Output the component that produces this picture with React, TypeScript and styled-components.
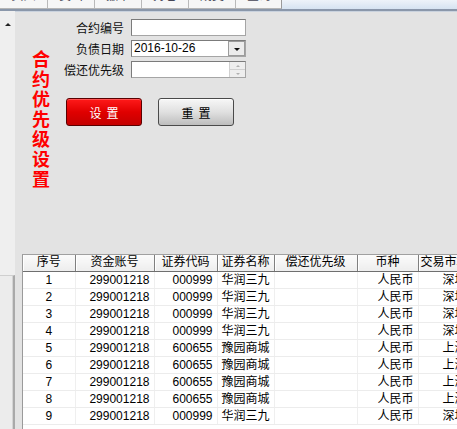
import React from 'react';
import styled, { createGlobalStyle } from 'styled-components';

const GlobalStyle = createGlobalStyle`
  html, body {
    margin: 0;
    padding: 0;
    background: #e3e3e3;
  }
  * {
    box-sizing: border-box;
  }
`;

type Row = {
  no: number;
  account: string;
  code: string;
  name: string;
  priority: string;
  currency: string;
  market: string;
};

const sz = { code: '000999', name: '华润三九', market: '深圳' };
const sh = { code: '600655', name: '豫园商城', market: '上海' };

const rows: Row[] = [sz, sz, sz, sz, sh, sh, sh, sh, sz].map((s, i) => ({
  no: i + 1,
  account: '299001218',
  priority: '',
  currency: '人民币',
  ...s,
}));

type Align = 'left' | 'center' | 'right';

const columns: { key: keyof Row; title: string; width: number; align: Align }[] = [
  { key: 'no', title: '序号', width: 52, align: 'center' },
  { key: 'account', title: '资金账号', width: 79, align: 'right' },
  { key: 'code', title: '证券代码', width: 63, align: 'right' },
  { key: 'name', title: '证券名称', width: 57, align: 'left' },
  { key: 'priority', title: '偿还优先级', width: 83, align: 'left' },
  { key: 'currency', title: '币种', width: 61, align: 'right' },
  { key: 'market', title: '交易市场', width: 53, align: 'right' },
];

const tableWidth = columns.reduce((sum, c) => sum + c.width, 0);

const tabs = ['买入', '卖出', '撤单', '持仓', '成交', '查询'];

const App: React.FC = () => {
  return (
    <Page>
      <GlobalStyle />
      <TabBar>
        <Tabs>
          {tabs.map((t) => (
            <Tab key={t}>
              <span>{t}</span>
            </Tab>
          ))}
        </Tabs>
        <TabFiller />
      </TabBar>
      <Body>
        <ScrollStrip>
          <UpArrow />
          <Thumb />
        </ScrollStrip>
        <Content>
          <TopSection>
            <Title>合约优先级设置</Title>
            <FormCol>
              <Field>
                <Label>合约编号</Label>
                <TextBox />
              </Field>
              <Field>
                <Label>负债日期</Label>
                <TextBox>
                  <BoxText>2016-10-26</BoxText>
                  <DropButton>
                    <DownTri />
                  </DropButton>
                </TextBox>
              </Field>
              <Field>
                <Label>偿还优先级</Label>
                <TextBox>
                  <BoxText />
                  <Spinner>
                    <SpinHalf>
                      <SpinTri $up />
                    </SpinHalf>
                    <SpinHalf>
                      <SpinTri />
                    </SpinHalf>
                  </Spinner>
                </TextBox>
              </Field>
              <ButtonRow>
                <ActionButton $primary type="button">设置</ActionButton>
                <ActionButton type="button">重置</ActionButton>
              </ButtonRow>
            </FormCol>
          </TopSection>
          <TableWrap>
            <Grid style={{ width: tableWidth }}>
              <colgroup>
                {columns.map((c) => (
                  <col key={c.key} style={{ width: c.width }} />
                ))}
              </colgroup>
              <thead>
                <tr>
                  {columns.map((c) => (
                    <HeadCell key={c.key}>{c.title}</HeadCell>
                  ))}
                </tr>
              </thead>
              <tbody>
                {rows.map((r) => (
                  <tr key={r.no}>
                    {columns.map((c) => (
                      <Cell key={c.key} $align={c.align}>
                        {r[c.key]}
                      </Cell>
                    ))}
                  </tr>
                ))}
              </tbody>
            </Grid>
          </TableWrap>
        </Content>
      </Body>
    </Page>
  );
};

export default App;

const uiFont = `"Liberation Sans", "Noto Sans CJK SC", sans-serif`;

const Page = styled.div`
  width: 457px;
  height: 429px;
  overflow: hidden;
  background: #e3e3e3;
  font-family: ${uiFont};
  font-size: 12px;
  color: #000;
  display: flex;
  flex-direction: column;
`;

const TabBar = styled.div`
  height: 11px;
  flex-shrink: 0;
  display: flex;
  border-bottom: 2px solid #8a97aa;
  box-shadow: 0 1px 0 #c9d2de;
`;

const Tabs = styled.div`
  display: flex;
  width: 282px;
  background: #f6f6f6;
  border-right: 1px solid #9a9a9a;
  border-bottom: 1px solid #b5b5b5;
  overflow: hidden;
`;

const Tab = styled.div`
  width: 47px;
  flex-shrink: 0;
  border-right: 1px solid #b9b9b9;
  overflow: hidden;
  text-align: center;
  color: #445;

  &:first-child {
    width: 48px;
  }

  span {
    display: block;
    line-height: 12px;
    margin-top: -10px;
    font-size: 12px;
  }
`;

const TabFiller = styled.div`
  flex: 1;
  background: linear-gradient(#eef3f9, #d6e3f1);
`;

const Body = styled.div`
  flex: 1;
  display: flex;
  min-height: 0;
`;

const ScrollStrip = styled.div`
  width: 15px;
  flex-shrink: 0;
  background: #efefef;
  display: flex;
  flex-direction: column;
  align-items: stretch;
`;

const UpArrow = styled.div`
  align-self: center;
  margin-top: 12px;
  width: 0;
  height: 0;
  border-left: 3px solid transparent;
  border-right: 3px solid transparent;
  border-bottom: 3px solid #222;
`;

const Thumb = styled.div`
  margin-top: 249px;
  flex: 1;
  background: #ececec;
  border-top: 1px solid #cfcfcf;
  border-right: 2px solid #a9a9a9;
  box-shadow: inset -1px 0 0 #d4d4d4;
`;

const Content = styled.div`
  flex: 1;
  display: flex;
  flex-direction: column;
  min-width: 0;
`;

const TopSection = styled.div`
  height: 243px;
  flex-shrink: 0;
  display: flex;
`;

const Title = styled.div`
  margin-left: 17px;
  margin-top: 39px;
  width: 19px;
  font-size: 18px;
  line-height: 20px;
  font-weight: 600;
  color: #ff0000;
  word-break: break-all;
`;

const FormCol = styled.div`
  margin-left: 13px;
  padding-top: 8px;
  display: flex;
  flex-direction: column;
  gap: 4px;
`;

const Field = styled.div`
  display: flex;
  align-items: center;
  gap: 7px;
  height: 17px;
`;

const Label = styled.div`
  width: 60px;
  text-align: right;
  white-space: nowrap;
  font-size: 12px;
  color: #111;
`;

const TextBox = styled.div`
  width: 115px;
  height: 17px;
  background: #fff;
  border: 1px solid #a5a5a5;
  border-top-color: #7b7b7b;
  border-left-color: #7b7b7b;
  display: flex;
  align-items: stretch;
`;

const BoxText = styled.div`
  flex: 1;
  padding-left: 2px;
  font-size: 12px;
  line-height: 15px;
`;

const DropButton = styled.div`
  width: 17px;
  background: #ececec;
  border: 1px solid #9c9c9c;
  display: flex;
  align-items: center;
  justify-content: center;
`;

const DownTri = styled.div`
  width: 0;
  height: 0;
  margin-top: 2px;
  border-left: 3px solid transparent;
  border-right: 3px solid transparent;
  border-top: 3px solid #111;
`;

const Spinner = styled.div`
  width: 16px;
  display: flex;
  flex-direction: column;
  background: #eeeeee;
  border-left: 1px solid #d0d0d0;
`;

const SpinHalf = styled.div`
  flex: 1;
  display: flex;
  align-items: center;
  justify-content: center;
  & + & {
    border-top: 1px solid #d0d0d0;
  }
`;

const SpinTri = styled.div<{ $up?: boolean }>`
  width: 0;
  height: 0;
  border-left: 2px solid transparent;
  border-right: 2px solid transparent;
  ${(p) => (p.$up ? 'border-bottom: 2px solid #b0b0b0;' : 'border-top: 2px solid #b0b0b0;')}
`;

const ButtonRow = styled.div`
  margin-top: 16px;
  padding-left: 2px;
  display: flex;
  gap: 16px;
`;

const ActionButton = styled.button<{ $primary?: boolean }>`
  width: 76px;
  height: 28px;
  padding: 0;
  border-radius: 3px;
  font-family: ${uiFont};
  font-size: 12px;
  letter-spacing: 5px;
  text-indent: 5px;
  cursor: pointer;
  border: 1px solid ${(p) => (p.$primary ? '#5a0000' : '#4a4a4a')};
  color: ${(p) => (p.$primary ? '#fff' : '#000')};
  background: ${(p) =>
    p.$primary
      ? 'linear-gradient(#ff1a1a, #e00000 50%, #c40000)'
      : 'linear-gradient(#f7f7f7, #e0e0e0 50%, #bdbdbd)'};
  box-shadow: inset 0 1px 0 ${(p) => (p.$primary ? 'rgba(255,120,120,0.6)' : '#ffffff')};
`;

const TableWrap = styled.div`
  flex: 1;
  margin-left: 7px;
  background: #fff;
  overflow: hidden;
  border-left: 1px solid #9a9a9a;
  border-top: 1px solid #a0a0a0;
`;

const Grid = styled.table`
  table-layout: fixed;
  border-collapse: collapse;
  font-size: 12px;
`;

const HeadCell = styled.th`
  height: 16px;
  padding: 0;
  font-weight: normal;
  text-align: center;
  white-space: nowrap;
  overflow: hidden;
  line-height: 15px;
  background: linear-gradient(#fbfbfb, #ededed);
  border-bottom: 1px solid #6f6f6f;
  border-right: 1px solid #7f7f7f;
  box-shadow: inset 1px 0 0 #ffffff;
`;

const Cell = styled.td<{ $align: Align }>`
  height: 17px;
  padding: 0 ${(p) => (p.$align === 'center' ? 0 : 4)}px;
  text-align: ${(p) => p.$align};
  white-space: nowrap;
  overflow: hidden;
  line-height: 16px;
  border-bottom: 1px solid #ececec;
  border-right: 1px solid #efefef;
`;
